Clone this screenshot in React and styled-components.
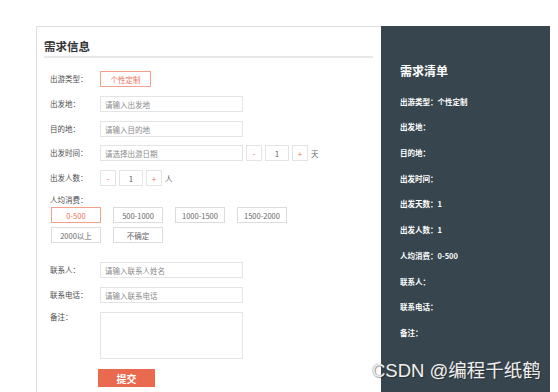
import React from "react";
import styled, { createGlobalStyle, css } from "styled-components";

const Global = createGlobalStyle`
  html, body { margin: 0; padding: 0; background: #fff; overflow: hidden; }
  body { font-family: "Noto Sans CJK SC", "Noto Sans", sans-serif; }
  * { box-sizing: border-box; }
`;

const Page = styled.div`
  position: relative;
  width: 558px;
  height: 392px;
  padding: 26px 0 0 36px;
`;

const Frame = styled.div`
  display: flex;
  width: 514px;
  height: 366px;
`;

const LeftPanel = styled.div`
  width: 345px;
  border-left: 1px solid #dedede;
  border-top: 1px solid #dedede;
  padding: 0 8px 0 7px;
`;

const Header = styled.div`
  padding-top: 12px;
  padding-bottom: 3px;
  border-bottom: 2px solid #e8e8e8;
`;

const Title = styled.h2`
  margin: 0;
  font-size: 11.5px;
  line-height: 14px;
  font-weight: 700;
  color: #333;
`;

const Form = styled.div`
  padding: 13px 0 0 6px;
  display: flex;
  flex-direction: column;
`;

const Row = styled.div`
  display: flex;
  align-items: ${(p) => (p.$top ? "flex-start" : "center")};
  margin-bottom: ${(p) => p.$mb ?? 9}px;
`;

const Label = styled.div`
  width: 50px;
  flex: none;
  font-size: 7.5px;
  line-height: 10px;
  color: #4d4d4d;
  white-space: nowrap;
`;

const Tag = styled.div`
  height: 16px;
  display: flex;
  align-items: center;
  justify-content: center;
  font-size: 7.5px;
  color: #666;
  border: 1px solid #dcdcdc;
  background: #fff;
  white-space: nowrap;
  width: ${(p) => p.$w || 50}px;
  ${(p) =>
    p.$active &&
    css`
      color: #ef6f56;
      border-color: #f3a08d;
    `}
`;

const Input = styled.div`
  width: 143px;
  height: ${(p) => p.$h || 16}px;
  border: 1px solid #e4e4e4;
  padding-left: 4px;
  font-size: 7.5px;
  color: #8a8a8a;
  display: flex;
  align-items: ${(p) => (p.$h ? "flex-start" : "center")};
`;

const Stepper = styled.div`
  display: flex;
  align-items: center;
  gap: 3px;
  margin-left: ${(p) => p.$ml || 0}px;
`;

const StepBtn = styled.div`
  width: 16px;
  height: 16px;
  border: 1px solid #e4e4e4;
  display: flex;
  align-items: center;
  justify-content: center;
  font-size: 8px;
  color: #ef6f56;
`;

const StepVal = styled(StepBtn)`
  width: 24px;
  color: #666;
`;

const Unit = styled.span`
  font-size: 7.5px;
  color: #666;
`;

const SubLabel = styled(Label)`
  width: auto;
  margin-bottom: 2px;
`;

const Options = styled.div`
  display: flex;
  flex-wrap: wrap;
  width: 240px;
  column-gap: 12px;
  row-gap: 4px;
  margin-left: 1px;
  margin-bottom: 19px;
`;

const Submit = styled.button`
  width: 57px;
  height: 18px;
  margin: 1px 0 0 48px;
  border: none;
  background: #ea6a50;
  color: #fff;
  font-family: inherit;
  font-size: 10px;
  font-weight: 700;
  padding: 0;
`;

const RightPanel = styled.div`
  width: 169px;
  background: #37464e;
  padding: 38px 0 0 19px;
  color: #fff;
`;

const ListTitle = styled.h3`
  margin: 0 0 18.7px;
  font-size: 12px;
  line-height: 14px;
  font-weight: 700;
`;

const Item = styled.div`
  font-size: 7.5px;
  line-height: 10px;
  font-weight: 700;
  margin-bottom: 15.7px;
`;

const Watermark = styled.div`
  position: absolute;
  left: 372px;
  top: 360px;
  font-family: "Liberation Sans", "Noto Sans CJK SC", sans-serif;
  font-size: 18.5px;
  line-height: 22px;
  color: rgba(255, 255, 255, 0.92);
  text-shadow: 0 0 1px #555, 1px 1px 1px rgba(0, 0, 0, 0.35);
  white-space: nowrap;
`;

const prices = ["0-500", "500-1000", "1000-1500", "1500-2000", "2000以上", "不确定"];
const summary = [
  "出游类型：个性定制",
  "出发地：",
  "目的地：",
  "出发时间：",
  "出发天数：1",
  "出发人数：1",
  "人均消费：0-500",
  "联系人：",
  "联系电话：",
  "备注：",
];

export default function App() {
  return (
    <>
      <Global />
      <Page>
        <Frame>
          <LeftPanel>
            <Header>
              <Title>需求信息</Title>
            </Header>
            <Form>
              <Row>
                <Label>出游类型：</Label>
                <Tag $active $w={51}>个性定制</Tag>
              </Row>
              <Row>
                <Label>出发地：</Label>
                <Input>请输入出发地</Input>
              </Row>
              <Row $mb={8}>
                <Label>目的地：</Label>
                <Input>请输入目的地</Input>
              </Row>
              <Row>
                <Label>出发时间：</Label>
                <Input>请选择出游日期</Input>
                <Stepper $ml={3}>
                  <StepBtn>-</StepBtn>
                  <StepVal>1</StepVal>
                  <StepBtn>+</StepBtn>
                  <Unit>天</Unit>
                </Stepper>
              </Row>
              <Row>
                <Label>出发人数：</Label>
                <Stepper>
                  <StepBtn>-</StepBtn>
                  <StepVal>1</StepVal>
                  <StepBtn>+</StepBtn>
                  <Unit>人</Unit>
                </Stepper>
              </Row>
              <SubLabel>人均消费：</SubLabel>
              <Options>
                {prices.map((p, i) => (
                  <Tag key={p} $active={i === 0}>
                    {p}
                  </Tag>
                ))}
              </Options>
              <Row>
                <Label>联系人：</Label>
                <Input>请输入联系人姓名</Input>
              </Row>
              <Row>
                <Label>联系电话：</Label>
                <Input>请输入联系电话</Input>
              </Row>
              <Row $top $mb={9}>
                <Label>备注：</Label>
                <Input $h={47} />
              </Row>
              <Submit>提交</Submit>
            </Form>
          </LeftPanel>
          <RightPanel>
            <ListTitle>需求清单</ListTitle>
            {summary.map((s) => (
              <Item key={s}>{s}</Item>
            ))}
          </RightPanel>
        </Frame>
        <Watermark>CSDN @编程千纸鹤</Watermark>
      </Page>
    </>
  );
}
